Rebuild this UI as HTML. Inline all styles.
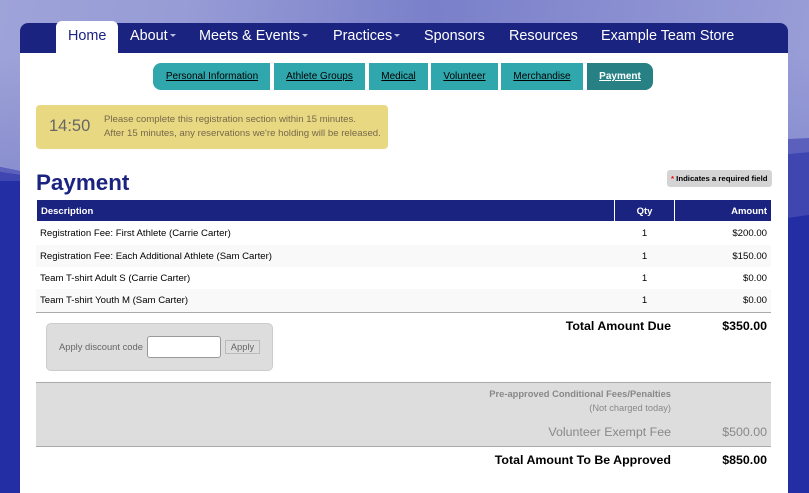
<!DOCTYPE html>
<html><head><meta charset="utf-8"><style>
*{box-sizing:border-box}
html,body{margin:0;padding:0}
body{width:809px;height:493px;overflow:hidden;position:relative;font-family:"Liberation Sans",sans-serif;background:#232ea5}
.a{position:absolute;white-space:nowrap}
.r{text-align:right}
.c{text-align:center}
.nav{top:28px;font-size:14.4px;line-height:17px;color:#fff}
.car{display:inline-block;width:0;height:0;border:3px solid transparent;border-top-color:#b9bcd9;border-bottom:0;margin-left:2px;vertical-align:3px}
.tab{top:63px;height:27px;background:#2fa7ac;font-size:10px;line-height:28px;text-align:center;color:#000;text-decoration:underline}
.th{top:200px;height:21px;line-height:23px;font-size:9.5px;font-weight:bold;color:#fff}
.td{font-size:9.6px;line-height:12px;color:#000}
.big{font-size:12.4px;line-height:14px}
</style></head><body>
<div class="a" style="left:0;top:0;width:809px;height:185px;background:linear-gradient(180deg,rgba(0,0,0,0) 30%,rgba(60,65,170,.22) 100%),linear-gradient(100deg,#9ea3d8 0%,#979cd6 22%,#7a80c9 52%,#8a8fd1 75%,#9a9fd8 100%)"></div>
<svg class="a" style="left:0;top:0" width="809" height="225" viewBox="0 0 809 225">
<path d="M0 167 L20 171 L20 226 L0 226Z" fill="#232ea5"/>
<path d="M0 167 L20 171 L20 175 L0 172Z" fill="#5a60bb"/>
<path d="M0 172 L20 175 L20 181 L0 181Z" fill="#3f46b0"/>
<path d="M788 139 L809 138 L809 152 L788 154Z" fill="#5a60bb"/>
<path d="M788 154 L809 152 L809 215 L788 218Z" fill="#3f46b0"/>
<path d="M788 218 L809 215 L809 225 L788 225Z" fill="#232ea5"/>
</svg>
<div class="a" style="left:20px;top:23px;width:768px;height:470px;background:#fff;border-radius:8px 8px 0 0"></div>
<div class="a" style="left:20px;top:23px;width:768px;height:30px;background:#1b2380;border-radius:8px 8px 0 0"></div>
<div class="a" style="left:56px;top:21px;width:62px;height:32px;background:#fff;border-radius:6px 6px 0 0"></div>
<div class="a nav" style="left:68px;color:#1b2380">Home</div>
<div class="a nav" style="left:130px">About<span class="car"></span></div>
<div class="a nav" style="left:199px">Meets &amp; Events<span class="car"></span></div>
<div class="a nav" style="left:333px">Practices<span class="car"></span></div>
<div class="a nav" style="left:424px">Sponsors</div>
<div class="a nav" style="left:509px">Resources</div>
<div class="a nav" style="left:601px">Example Team Store</div>

<div class="a tab" style="left:153px;width:117px;border-radius:8px 0 0 8px;padding-left:1px">Personal Information</div>
<div class="a tab" style="left:274px;width:91px">Athlete Groups</div>
<div class="a tab" style="left:369px;width:59px">Medical</div>
<div class="a tab" style="left:431px;width:67px">Volunteer</div>
<div class="a tab" style="left:501px;width:82px">Merchandise</div>
<div class="a tab" style="left:587px;width:66px;border-radius:0 8px 8px 0;background:#268084;color:#fff;font-weight:bold">Payment</div>

<div class="a" style="left:36px;top:105px;width:352px;height:44px;background:#e8d882;border-radius:4px"></div>
<div class="a" style="left:49px;top:116px;font-size:16.5px;line-height:20px;color:#666">14:50</div>
<div class="a" style="left:104px;top:113px;font-size:9.65px;line-height:14px;color:#77694a">Please complete this registration section within 15 minutes.<br>After 15 minutes, any reservations we're holding will be released.</div>

<div class="a" style="left:36px;top:169px;font-size:22.4px;line-height:27px;font-weight:bold;color:#1b2380">Payment</div>
<div class="a" style="left:667px;top:170px;width:105px;height:17px;background:#d4d4d4;border-radius:3px;font-size:7.75px;line-height:17px;font-weight:bold;color:#000;padding-left:4px"><span style="color:#f00">*</span> Indicates a required field</div>

<div class="a" style="left:37px;top:200px;width:734px;height:21px;background:#1b2380"></div>
<div class="a" style="left:614px;top:200px;width:1px;height:21px;background:#fff"></div>
<div class="a" style="left:674px;top:200px;width:1px;height:21px;background:#fff"></div>
<div class="a th" style="left:41px">Description</div>
<div class="a th c" style="left:615px;width:59px">Qty</div>
<div class="a th r" style="left:675px;width:92px">Amount</div>

<div class="a" style="left:36px;top:245px;width:735px;height:22px;background:#f9f9f9"></div>
<div class="a" style="left:36px;top:289px;width:735px;height:23px;background:#f9f9f9"></div>
<div class="a" style="left:36px;top:312px;width:735px;height:1px;background:#aaa"></div>

<div class="a td" style="left:40px;top:228px">Registration Fee: First Athlete (Carrie Carter)</div>
<div class="a td c" style="left:615px;top:228px;width:59px">1</div>
<div class="a td r" style="left:675px;top:228px;width:92px">$200.00</div>
<div class="a td" style="left:40px;top:251px">Registration Fee: Each Additional Athlete (Sam Carter)</div>
<div class="a td c" style="left:615px;top:251px;width:59px">1</div>
<div class="a td r" style="left:675px;top:251px;width:92px">$150.00</div>
<div class="a td" style="left:40px;top:273px">Team T-shirt Adult S (Carrie Carter)</div>
<div class="a td c" style="left:615px;top:273px;width:59px">1</div>
<div class="a td r" style="left:675px;top:273px;width:92px">$0.00</div>
<div class="a td" style="left:40px;top:295px">Team T-shirt Youth M (Sam Carter)</div>
<div class="a td c" style="left:615px;top:295px;width:59px">1</div>
<div class="a td r" style="left:675px;top:295px;width:92px">$0.00</div>

<div class="a r big" style="left:400px;top:319px;width:271px;font-weight:bold;color:#000">Total Amount Due</div>
<div class="a r big" style="left:675px;top:319px;width:92px;font-weight:bold;color:#000">$350.00</div>

<div class="a" style="left:46px;top:323px;width:227px;height:48px;background:#ddd;border:1px solid #ccc;border-radius:5px"></div>
<div class="a" style="left:59px;top:341px;font-size:9.4px;line-height:12px;color:#666">Apply discount code</div>
<div class="a" style="left:147px;top:336px;width:74px;height:22px;background:#fff;border:1px solid #999;border-radius:3px"></div>
<div class="a c" style="left:225px;top:340px;width:35px;height:14px;background:#ddd;border:1px solid #bbb;font-size:9.4px;line-height:12px;color:#666">Apply</div>

<div class="a" style="left:36px;top:382px;width:735px;height:65px;background:#ddd;border-top:1px solid #aaa;border-bottom:1px solid #aaa"></div>
<div class="a r" style="left:400px;top:388px;width:271px;font-size:9.35px;line-height:12px;font-weight:bold;color:#888">Pre-approved Conditional Fees/Penalties</div>
<div class="a r" style="left:400px;top:402px;width:271px;font-size:9.25px;line-height:12px;color:#888">(Not charged today)</div>
<div class="a r big" style="left:400px;top:425px;width:271px;color:#888">Volunteer Exempt Fee</div>
<div class="a r big" style="left:675px;top:425px;width:92px;color:#888">$500.00</div>
<div class="a r big" style="left:400px;top:453px;width:271px;font-weight:bold;color:#000">Total Amount To Be Approved</div>
<div class="a r big" style="left:675px;top:453px;width:92px;font-weight:bold;color:#000">$850.00</div>
</body></html>
